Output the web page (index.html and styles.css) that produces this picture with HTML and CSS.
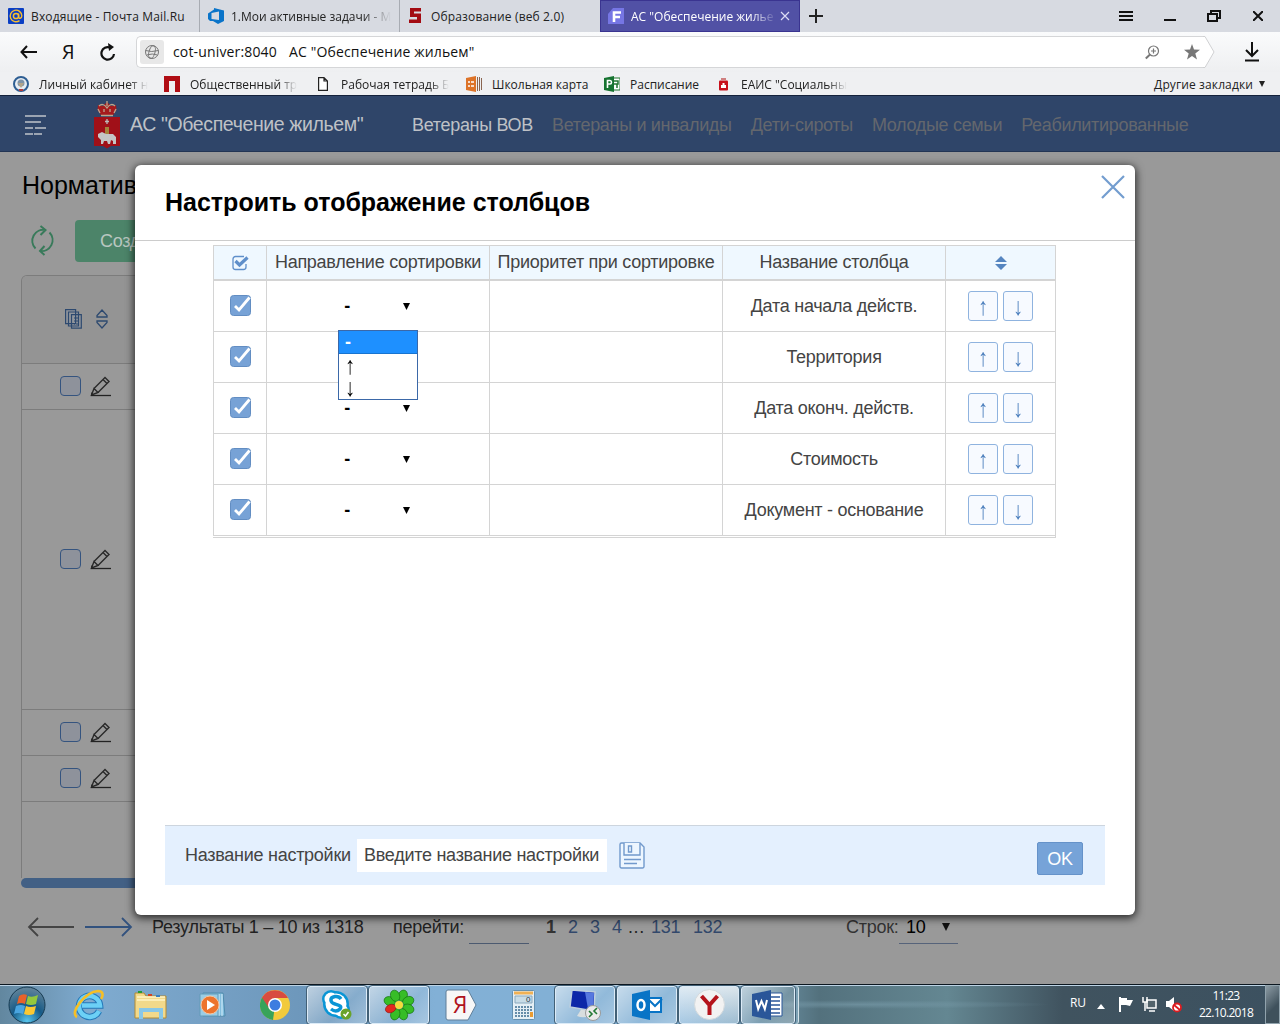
FILE: index.html
```
<!DOCTYPE html>
<html lang="ru">
<head>
<meta charset="utf-8">
<title>АС "Обеспечение жильем"</title>
<link rel="stylesheet" href="styles.css">
</head>
<body>
<svg class="defs" width="0" height="0">
  <symbol id="pencil" viewBox="0 0 22 22"><path d="M4 13.500 15 2.500l4 4L8 17.500M4 13.500 1.500 20l6.500-2.500zM13 4.500l4 4" fill="none" stroke="#292929" stroke-width="1.400"/><path d="M1 17v4h3" fill="#292929"/><path d="M1 20.500h20" stroke="#222" stroke-width="1.300"/></symbol>
  <symbol id="check" viewBox="0 0 21 21"><rect x=".5" y=".5" width="20" height="20" rx="3" fill="#77a2d6" stroke="#628dc2"/><path d="M5 11 9 15 19.500 2.500" fill="none" stroke="#fff" stroke-width="2.800"/></symbol>
</svg>
<div class="tabs">
  <div class="tab"><svg width="16" height="16"><rect width="16" height="16" rx="1" fill="#0b3fc4"/><circle cx="8" cy="8" r="2.600" fill="none" stroke="#f6bd2f" stroke-width="1.500"/><path d="M10.600 5.500v3.600c0 2 3.200 1.500 3.200-1.300A5.800 5.800 0 1 0 11.500 12.600" fill="none" stroke="#f6bd2f" stroke-width="1.400"/></svg><span class="t1">Входящие - Почта Mail.Ru</span></div>
  <div class="tab"><svg width="16" height="16"><path fill-rule="evenodd" d="M0 5.500 6 1.500V0l10 2.500v10.500L10 16l-5-3H2L0 11zM3.500 5v6l7.500 1V3.500z" fill="#0a74c9"/></svg><span class="t2 fade">1.Мои активные задачи - М</span></div>
  <div class="tab"><svg width="16" height="16"><path d="M2 0h11v3.500H6v2h7V15H1v-3.500h8V9H2z" fill="#a30b12"/></svg><span class="t3">Образование (веб 2.0)</span></div>
  <div class="tab active"><svg width="16" height="16"><path d="M5 0h11v16H0V6z" fill="#7676e4"/><path d="M6 14V4.500h7M6 9h6" stroke="#fff" stroke-width="2.600" fill="none"/></svg><span class="t4 fade">АС "Обеспечение жилье</span><svg class="x" width="10" height="10"><path d="M1 1l8 8M9 1 1 9" stroke="#dcdcf4" stroke-width="1.200"/></svg></div>
  <svg class="plus" width="14" height="14"><path d="M7 0v14M0 7h14" stroke="#222" stroke-width="2"/></svg>
  <div class="winbtns">
    <svg width="14" height="12"><path d="M0 2h14M0 6h14M0 10h14" stroke="#111" stroke-width="2"/></svg>
    <svg width="12" height="12"><path d="M0 10h12" stroke="#111" stroke-width="2"/></svg>
    <svg width="14" height="12"><path d="M1 4h9v7H1zM4 4V1h9v7h-3" fill="none" stroke="#111" stroke-width="2"/></svg>
    <svg width="10" height="10"><path d="M0 0l10 10M10 0 0 10" stroke="#111" stroke-width="2"/></svg>
  </div>
</div>
<div class="toolbar">
  <svg width="17" height="14"><path d="M7 1 1.500 7 7 13M1.500 7H17" fill="none" stroke="#111" stroke-width="2"/></svg>
  <span class="ya">Я</span>
  <svg width="16" height="18"><path d="M14 11A6.300 6.300 0 1 1 10 4.500" fill="none" stroke="#111" stroke-width="2.200"/><path d="M8 0l6 4-5 4z" fill="#111"/></svg>
  <div class="omni">
    <div class="globe"><svg width="16" height="16"><g fill="none" stroke="#777"><circle cx="8" cy="8" r="6.500"/><ellipse cx="8" cy="8" rx="3" ry="6.500" transform="rotate(15 8 8)"/><path d="M1.500 6.500q6 2 13 0M2.500 11q6-2 11 0"/></g></svg></div>
    <span class="url">cot-univer:8040</span><span class="ptitle">АС "Обеспечение жильем"</span>
    <svg class="mag" width="15" height="15"><circle cx="8.500" cy="6" r="5" fill="none" stroke="#777" stroke-width="1.200"/><path d="M6 6h5M8.500 3.500v5" stroke="#777" stroke-width="1.200"/><path d="M5 9.500.8 13.500" stroke="#777" stroke-width="2"/></svg>
    <svg class="star" width="16" height="16"><path d="M8 0l2 5.600 6 .2-4.700 3.700L13 15.500 8 12l-5 3.500 1.700-6L0 5.800l6-.2z" fill="#777"/></svg>
    <svg class="edge" width="12" height="32"><path d="M0 0H2L11 16 2 32H0z" fill="#fff"/><path d="M0 .5H2L11 16 2 31.500H0" fill="none" stroke="#cfd0d2"/></svg>
  </div>
  <svg class="dl" width="14" height="20"><path d="M7 0v14M1 8l6 6 6-6M0 18.500h14" fill="none" stroke="#111" stroke-width="2"/></svg>
</div>
<div class="bookmarks">
  <div class="bm b1"><svg width="16" height="16"><circle cx="8" cy="8" r="7" fill="#e8edf2" stroke="#2e5e93" stroke-width="2"/><circle cx="8" cy="7" r="3.500" fill="#7d93a8"/><path d="M5 7l3 5 3-5" fill="#b2a48a"/><path d="M6 14h4" stroke="#b23b3b" stroke-width="2"/></svg><span class="fade">Личный кабинет н</span></div>
  <div class="bm b2"><svg width="16" height="16"><path d="M0 0h16v16h-5V5H5v11H0z" fill="#b00d14"/></svg><span class="fade">Общественный тр</span></div>
  <div class="bm b3"><svg width="10" height="14"><path d="M.6.6H6L9.400 4v9.400H.6zM6 .6V4h3.400" fill="#fff" stroke="#222" stroke-width="1.200"/></svg><span class="fade">Рабочая тетрадь Б</span></div>
  <div class="bm b4"><svg width="16" height="16"><path d="M0 2 10 0v16L0 14z" fill="#dd7328"/><path d="M11.500 1v14M13.500 1v14M15.500 2v12" stroke="#8a6550"/><path d="M2 6h2m1 0h3M2 10h2m1 0h3" stroke="#fff" stroke-width="1.500"/></svg><span>Школьная карта</span></div>
  <div class="bm b5"><svg width="16" height="16"><path d="M9 2h7v12H9z" fill="#fff" stroke="#21742f"/><path d="M10 5h4v3h-4M13 8v4" fill="none" stroke="#21742f" stroke-width="1.500"/><path d="M0 2 10 0v16L0 14z" fill="#167330"/><path d="M3.500 12V4.500H6c2 0 2 3.500 0 3.500H4" fill="none" stroke="#fff" stroke-width="1.600"/></svg><span>Расписание</span></div>
  <div class="bm b6"><svg width="9" height="14"><path d="M2 1h5v2H2z" fill="#cf8080"/><rect y="3.500" width="9" height="10" rx="1" fill="#c8101b"/><path d="M3.500 6h2v2h1.500v3H2V8h1.500z" fill="#fff"/></svg><span class="fade">ЕАИС "Социальны</span></div>
  <div class="other"><span>Другие закладки</span><svg width="6" height="6"><path d="M0 0h6L3 6z" fill="#222"/></svg></div>
</div>
<div class="page">
  <div class="apphead">
    <svg class="burger" width="22" height="20"><path d="M0 1h21M0 7h16M0 13h8M10 13h11M0 19h8M9 19h8" stroke="#c0c3ca" stroke-width="1.400"/></svg>
    <svg class="crest" width="26" height="48"><path d="M4 4l5 1 4-4 4 4 5-1 .5 5-4 6h-11l-4-6z" fill="#a51a1d"/><path d="M13 0v5M5 5c3-3 6-1 8 2 2-3 5-5 8-2M4 8l2 4M22 8l-2 4M10 8v3M16 8v3M7 14.500h12" stroke="#b8a78f" stroke-width="1.300" fill="none"/><path d="M0 16h26v29H17l-4 2.500L9 45H0z" fill="#a01018"/><path d="M13 18v5M11 20.500h4" stroke="#bbb" stroke-width="1.300"/><path d="M11 26h4v7h-4z" fill="#a5823c"/><path d="M4 33l4-2 4 2h7l3 3v7h-3v-3l-2-1-1 4h-2l-1-3-3 0-1 3H7v-4l-3-3z" fill="#c5c5c5"/></svg>
    <span class="brand">АС "Обеспечение жильем"</span>
    <nav><span class="on">Ветераны ВОВ</span><span>Ветераны и инвалиды</span><span>Дети-сироты</span><span>Молодые семьи</span><span>Реабилитированные</span></nav>
  </div>
  <div class="content">
    <h1>Нормативы</h1>
    <div class="actions">
      <svg class="reload" width="25" height="31"><g fill="none" stroke="#387a5a" stroke-width="2"><path d="M5.500 23.500A11 11 0 0 1 15.500 5M19.500 7.500A11 11 0 0 1 10 26M10.500 1l5 4-5 5M14.500 21l-4.500 5 4.500 4"/></g></svg>
      <div class="create">Создать</div>
    </div>
    <div class="grid">
      <div class="row rhead">
        <svg width="17" height="20"><g fill="#92969c" stroke="#2d496f" stroke-width="1.200"><path d="M.6.6h10v14H.6zM3.500 3h10v14h-10zM6.500 5.600h9.800v13.600H6.500z"/><path d="M9 9h1m1 0h3M9 12h1m1 0h3M9 15h1m1 0h3"/></g></svg>
        <svg class="sorter" width="12" height="20"><path d="M1 8V6.500L6 1l5 5.500V8zM1 12v1.500L6 19l5-5.500V12z" fill="none" stroke="#2d496f" stroke-width="1.300"/></svg>
      </div>
      <div class="row"><i></i><svg width="22" height="22"><use href="#pencil"/></svg></div>
      <div class="row tall"><i></i><svg width="22" height="22"><use href="#pencil"/></svg></div>
      <div class="row"><i></i><svg width="22" height="22"><use href="#pencil"/></svg></div>
      <div class="row"><i></i><svg width="22" height="22"><use href="#pencil"/></svg></div>
      <div class="rest"></div>
    </div>
    <div class="hscroll"></div>
    <div class="pager">
      <svg width="48" height="20"><path d="M11 1 2 10l9 9M2 10h45" fill="none" stroke="#444" stroke-width="1.800"/></svg>
      <svg class="next" width="48" height="20"><path d="M37 1l9 9-9 9M46 10H0" fill="none" stroke="#32527e" stroke-width="1.800"/></svg>
      <span class="res">Результаты 1 – 10 из 1318</span>
      <span class="go">перейти:</span><span class="goin"></span>
      <div class="pages"><span class="cur">1</span><span>2</span><span>3</span><span>4</span><span class="dots">...</span><span class="p131">131</span><span>132</span></div>
      <span class="lines">Строк:</span><div class="cnt"><span>10</span><svg width="8" height="8"><path d="M0 0h8L4 8z" fill="#111"/></svg></div>
    </div>
  </div>
  <div class="modal">
    <div class="mhead"><h2>Настроить отображение столбцов</h2><svg width="24" height="24"><path d="M1 1l22 22M23 1 1 23" stroke="#739dcf" stroke-width="2.200"/></svg></div>
    <div class="cols">
      <div class="r h"><div><svg width="18" height="16"><path d="M15 9v3a2.500 2.500 0 0 1-2.500 2.500h-8A2.500 2.500 0 0 1 2 12V4a2.500 2.500 0 0 1 2.500-2.500H13" fill="none" stroke="#5f8fca" stroke-width="1.300"/><path d="M4.500 6l4 4L16.500 2.500" fill="none" stroke="#5f8fca" stroke-width="3.200"/></svg></div><div>Направление сортировки</div><div>Приоритет при сортировке</div><div>Название столбца</div><div><svg width="12" height="16"><path d="M0 7 6 1l6 6zM0 9h12l-6 6z" fill="#5585c0"/></svg></div></div>
      <div class="r"><div class="ck"><svg width="21" height="21"><use href="#check"/></svg></div><div class="sel"><span>-</span><svg width="7" height="7"><path d="M0 0h7L3.500 7z"/></svg></div><div></div><div>Дата начала действ.</div><div class="mv"><b><span>↑</span></b><b><span>↓</span></b></div></div>
      <div class="r"><div class="ck"><svg width="21" height="21"><use href="#check"/></svg></div><div class="sel"></div><div></div><div>Территория</div><div class="mv"><b><span>↑</span></b><b><span>↓</span></b></div></div>
      <div class="r"><div class="ck"><svg width="21" height="21"><use href="#check"/></svg></div><div class="sel"><span>-</span><svg width="7" height="7"><path d="M0 0h7L3.500 7z"/></svg></div><div></div><div>Дата оконч. действ.</div><div class="mv"><b><span>↑</span></b><b><span>↓</span></b></div></div>
      <div class="r"><div class="ck"><svg width="21" height="21"><use href="#check"/></svg></div><div class="sel"><span>-</span><svg width="7" height="7"><path d="M0 0h7L3.500 7z"/></svg></div><div></div><div>Стоимость</div><div class="mv"><b><span>↑</span></b><b><span>↓</span></b></div></div>
      <div class="r"><div class="ck"><svg width="21" height="21"><use href="#check"/></svg></div><div class="sel"><span>-</span><svg width="7" height="7"><path d="M0 0h7L3.500 7z"/></svg></div><div></div><div>Документ - основание</div><div class="mv"><b><span>↑</span></b><b><span>↓</span></b></div></div>
    </div>
    <div class="menu"><div class="pick">-</div><div class="opt"><span>↑</span></div><div class="opt"><span>↓</span></div></div>
    <div class="mfoot">
      <span class="lbl">Название настройки</span><div class="inp">Введите название настройки</div>
      <svg width="26" height="27"><g fill="#edf6ff" stroke="#7199cc" stroke-width="1.400"><path d="M1 2.500A1.500 1.500 0 0 1 2.500 1H21l4 4v19.500a1.500 1.500 0 0 1-1.500 1.500h-21A1.500 1.500 0 0 1 1 24.500z"/><path d="M5 1v12h16V1M9.500 4h3v6h-3zM5 17.500h17M5 21.500h13"/></g></svg>
      <div class="ok">OK</div>
    </div>
  </div>
</div>
<div class="taskbar">
  <div class="start"><svg width="38" height="38" viewBox="0 0 38 38"><defs><radialGradient id="orb" cx=".5" cy=".95" r=".9"><stop offset="0" stop-color="#58c6ee"/><stop offset=".5" stop-color="#165a87"/><stop offset="1" stop-color="#5f8299"/></radialGradient></defs><circle cx="19" cy="19" r="18" fill="url(#orb)" stroke="#173b52"/><path d="M11 10q4-3 8-1l-2 9q-4-2-8 0z" fill="#e8622a"/><path d="M20 10q4 2 10-1l-2 9q-5 2-10 0z" fill="#94c83d"/><path d="M8 20q5-2 9 0l-2 8q-5-2-9 0z" fill="#4aa5e0"/><path d="M18 20q4 2 10 0l-2 8q-5 2-10 0z" fill="#fbc832"/></svg></div>
  <div class="app"><svg width="32" height="32"><path d="M26 22A10.500 10.500 0 1 1 27 16.500H9" fill="none" stroke="#2478b8" stroke-width="6.500"/><path d="M26 22A10.500 10.500 0 1 1 27 16.500H9" fill="none" stroke="#6cd0f6" stroke-width="4.500"/><path d="M4 28C-4 24 12 3 25 2c6 0 5 5 3 8" fill="none" stroke="#f6bf26" stroke-width="2.600"/></svg></div>
  <div class="app"><svg width="34" height="30"><path d="M1 3h9l2 3h20v22H1z" fill="#f2d98b" stroke="#b38b35"/><path d="M3 7h28M3 10h28" stroke="#fff5c8" stroke-width="1.500"/><path d="M4 2h4" stroke="#279b31" stroke-width="2"/><path d="M14 5h4" stroke="#d24324" stroke-width="2"/><path d="M22 6h4" stroke="#3980c3" stroke-width="2"/><path d="M7 29v-9h20v9" fill="none" stroke="#88c7e8" stroke-width="4"/></svg></div>
  <div class="app"><svg width="28" height="26"><path d="M4 1h20l2 23H4z" fill="#83bede" stroke="#508bac"/><path d="M20 2v22M23 2v22" stroke="#d7f0fc"/><path d="M1 2h18v22H1z" fill="#9acde5" stroke="#629bb9"/><circle cx="11" cy="13" r="9" fill="#ed742d" stroke="#f7c5a0"/><path d="M8 8v10l8-5z" fill="#fff"/></svg></div>
  <div class="app"><svg width="30" height="30"><circle cx="15" cy="15" r="15" fill="#f2ca3c"/><path d="M15 15 13 30A15 15 0 0 1 2 7.500z" fill="#38a35a"/><path d="M15 8H28A15 15 0 0 0 2 7.500L9 18z" fill="#d84b40"/><circle cx="15" cy="15" r="7" fill="#fff"/><circle cx="15" cy="15" r="5.500" fill="#3e7de0"/></svg></div>
  <div class="app open"><svg width="32" height="32"><g fill="#0a95d5"><circle cx="10" cy="10" r="9"/><circle cx="20" cy="21" r="9"/><circle cx="15" cy="15" r="13"/></g><g fill="#fff"><circle cx="10" cy="10" r="6.500"/><circle cx="20" cy="21" r="6.500"/><circle cx="15" cy="15" r="10.500"/></g><path d="M20 10q-2-3-6-2.500c-6 1-5 6 0 7.500s7 2 5 5q-4 4-9 0" fill="none" stroke="#0a95d5" stroke-width="3.400"/><circle cx="25" cy="25" r="5.500" fill="#69a329"/><path d="M22.500 25l2 2 3-4" fill="none" stroke="#fff" stroke-width="1.500"/></svg></div>
  <div class="app open"><svg width="32" height="32" viewBox="-16 -16 32 32"><g fill="#37bd27" stroke="#126c0e" stroke-width=".6"><ellipse cx="0" cy="-10" rx="4.500" ry="5.800" transform="rotate(22)"/><ellipse cx="0" cy="-10" rx="4.500" ry="5.800" transform="rotate(67)"/><ellipse cx="0" cy="-10" rx="4.500" ry="5.800" transform="rotate(112)"/><ellipse cx="0" cy="-10" rx="4.500" ry="5.800" transform="rotate(157)"/><ellipse cx="0" cy="-10" rx="4.500" ry="5.800" transform="rotate(202)"/><ellipse cx="0" cy="-10" rx="4.500" ry="5.800" transform="rotate(292)"/><ellipse cx="0" cy="-10" rx="4.500" ry="5.800" transform="rotate(337)"/></g><ellipse cx="0" cy="-9" rx="4" ry="5.500" transform="rotate(247)" fill="#e22720" stroke="#8b1410" stroke-width=".6"/><circle r="4" fill="#f4dc3c"/></svg></div>
  <div class="app"><svg class="yatile" width="32" height="32"><path d="M3 1h20l8 15-8 15H3q-2 0-2-2V3q0-2 2-2z" fill="#f7f7f7" stroke="#607f99"/><text x="8" y="24" class="yatext">Я</text></svg></div>
  <div class="app"><svg width="23" height="30"><rect x=".5" y=".5" width="22" height="29" rx="1" fill="#e5eff5" stroke="#6591b0"/><path d="M2 3h19" stroke="#f0b154" stroke-width="3"/><path d="M3 6h17v7H3z" fill="#c8dce7" stroke="#8aa9be"/><path d="M3 17h17M3 20h17M3 23h17M3 26h17" stroke="#668da9" stroke-width="2" stroke-dasharray="2 1"/><path d="M18 22h3v5h-3z" fill="#eb9c31"/><text x="14" y="12" class="zero">0</text></svg></div>
  <div class="app open"><svg width="32" height="32"><path d="M13 19h8l2 7q-8 4-15 1z" fill="#d9dedf"/><path d="M3 1 26 3l-1 19L1 18z" fill="#0c27a8" stroke="#bed0de" stroke-width="1.500"/><path d="M16 3l9 1-1 17-5-1z" fill="#5678df"/><circle cx="24" cy="24" r="7.500" fill="#eaeaea" stroke="#999"/><path d="M20 22l3 3-3 3M28 19l-3 3 3 3" fill="none" stroke="#237935" stroke-width="1.600"/></svg></div>
  <div class="app open"><svg width="32" height="30"><path d="M17 8h13v14H17z" fill="#fff" stroke="#0874c6" stroke-width="2"/><path d="M18 10l6 6 7-7" fill="none" stroke="#0874c6" stroke-width="2"/><path d="M1 4 19 0v30L1 26z" fill="#0874c6"/><ellipse cx="10" cy="15" rx="3.500" ry="5" fill="none" stroke="#fff" stroke-width="2.500"/></svg></div>
  <div class="app open hot"><svg width="31" height="31"><circle cx="15.500" cy="15.500" r="15" fill="#f2f2f2" stroke="#d4dadd"/><path d="M7.500 7l8 9 8-9M15.500 15v11" fill="none" stroke="#b4131b" stroke-width="4"/></svg></div>
  <div class="app open word"><svg width="32" height="30"><path d="M18 3h12v23H18z" fill="#fff" stroke="#2a5699"/><path d="M19 7h9M19 11h9M19 15h9M19 19h9M19 23h9" stroke="#2a5699" stroke-width="1.500"/><path d="M0 4 19 0v30L0 26z" fill="#2a5699"/><path d="M4 10l2.200 9L9.500 11l3.300 8L15 10" fill="none" stroke="#fff" stroke-width="2"/></svg></div>
  <div class="tray">
    <span class="lang">RU</span>
    <svg class="up" width="8" height="5"><path d="M4 0l4 5H0z" fill="#fff"/></svg>
    <svg class="flag" width="16" height="15"><path d="M1 0h2v15H1z" fill="#fff"/><path d="M3 1h6v2h6l-3 6-4-1H3z" fill="#fff"/></svg>
    <svg class="net" width="15" height="15"><path d="M5 3h9v8H5z" fill="#52636c" stroke="#fff" stroke-width="1.500"/><path d="M1 0v5h4V0M3 5v9M7 14h6" fill="none" stroke="#fff" stroke-width="1.500"/></svg>
    <svg class="snd" width="16" height="16"><path d="M0 4h3l5-4v14l-5-4H0z" fill="#fff"/><circle cx="11" cy="10.500" r="4" fill="#fff" stroke="#dc1c20" stroke-width="1.800"/><path d="M8 8l6 5" stroke="#dc1c20" stroke-width="1.800"/></svg>
    <div class="clock"><span>11:23</span><span>22.10.2018</span></div>
    <div class="peek"></div>
  </div>
</div>
</body>
</html>
```
FILE: styles.css
```
* { box-sizing: border-box; }
body { margin: 0; width: 1280px; height: 1024px; overflow: hidden; display: flex; flex-direction: column; background: #999; font-family: "Liberation Sans", Arial, sans-serif; }
svg { flex: none; display: block; }
span { white-space: nowrap; }
.defs { position: absolute; }
.fade { -webkit-mask-image: linear-gradient(90deg, #000 82%, transparent 100%); mask-image: linear-gradient(90deg, #000 82%, transparent 100%); }

.tabs, .toolbar, .bookmarks { font-family: "Open Sans", "Noto Sans", sans-serif; flex: none; display: flex; align-items: center; color: #222; }
.tabs { height: 32px; background: #d7dae1; font-size: 12px; letter-spacing: .15px; }
.tab { width: 200px; height: 32px; padding: 0 8px; display: flex; align-items: center; gap: 7px; border-right: 1px solid #a8acb3; }
.tab:nth-child(3) { border-right: 0; }
.tab.active { padding-left: 7px; background: #5151a5; color: #fff; border: 1px solid #3a3490; letter-spacing: 0; }
.t2 { letter-spacing: 0; }
.t4 { width: 146px; }
.active .x { margin-left: -4px; }
.plus { margin-left: 9px; }
.winbtns { margin-left: auto; padding-right: 17px; display: flex; align-items: center; }
.winbtns svg:nth-child(2) { margin-left: 31px; }
.winbtns svg:nth-child(3) { margin-left: 31px; }
.winbtns svg:nth-child(4) { margin-left: 32px; }

.toolbar { height: 40px; padding: 0 21px 0 20px; background: linear-gradient(#fafbfc, #eeeff1); }
.ya { margin-left: 25px; width: 12px; margin-right: 26px; font-size: 20px; line-height: 24px; color: #111; }
.omni { margin-left: 20px; height: 32px; width: 1068px; border: 1px solid #d5d6d8; border-right: 0; border-radius: 5px 0 0 5px; background: #fff; display: flex; align-items: center; font-size: 14px; color: #111; letter-spacing: .15px; }
.omni span { margin-bottom: 2px; }
.globe { margin-left: 3px; width: 24px; height: 24px; border-radius: 3px; background: #e8e8e8; display: grid; place-items: center; }
.url { margin-left: 9px; width: 116px; }
.mag { margin-left: auto; margin-right: 24px; }
.star { margin-right: 3px; }
.edge { margin-right: -11px; }
.dl { margin-left: auto; }

.bookmarks { height: 24px; padding: 0 15px 0 13px; font-size: 12px; background: #eff0f2; border-bottom: 1px solid #14213b; }
.bookmarks span { padding-top: 1px; }
.bm { display: flex; align-items: center; gap: 10px; flex: none; }
.b1 { width: 151px; }
.b2 { width: 154px; }
.b3 { width: 148px; gap: 13px; }
.b4 { width: 138px; }
.b5 { width: 115px; }
.b6 { gap: 13px; }
.other { margin-left: auto; display: flex; align-items: center; gap: 6px; letter-spacing: .12px; }

.page { height: 888px; flex: none; position: relative; background: #999; font-size: 18px; letter-spacing: -.27px; color: #222; }
.apphead { height: 56px; padding-top: 2px; background: #2f4569; border-bottom: 1px solid #233554; display: flex; align-items: center; }
.burger { margin-left: 25px; }
.crest { margin-left: 47px; }
.brand { margin-left: 10px; width: 282px; font-size: 19.5px; letter-spacing: -.38px; color: #bec1c6; }
nav { display: flex; gap: 19px; color: #64676d; padding-top: 1px; }
nav span { letter-spacing: -.32px; }
nav .on { color: #bec1c6; }
.content { padding: 20px 21px 0; }
h1 { margin: 0; font-weight: 400; font-size: 25px; line-height: 27px; height: 28px; letter-spacing: 0; padding-left: 1px; color: #000; }
.actions { height: 42px; margin-top: 20px; display: flex; align-items: center; padding-left: 9px; }
.reload { margin-top: -2px; }
.create { margin-left: 20px; width: 120px; height: 42px; line-height: 42px; padding-left: 25px; border-radius: 4px; background: #4c8469; color: #b9c7c0; }
.grid { width: 1000px; margin-top: 13px; height: 603px; border: 1px solid #7c7c7c; border-bottom: 0; border-radius: 6px 6px 0 0; }
.row { height: 46px; border-bottom: 1px solid #7c7c7c; display: flex; align-items: center; padding: 0 0 2px 38px; }
.row.rhead { height: 88px; padding-left: 43px; background: #949494; border-radius: 5px 5px 0 0; }
.sorter { margin-left: 14px; }
.row.tall { height: 300px; }
.row i { width: 21px; height: 20px; border: 1px solid #35547f; border-radius: 4px; background: #8e929b; margin-right: 9px; }
.hscroll { height: 10px; width: 1000px; border-radius: 5px; background: #426085; }
.pager { margin-top: 20px; height: 36px; padding-left: 6px; display: flex; align-items: center; }
.pager > * { flex: none; margin-top: 2px; }
.next { margin-left: 10px; }
.res { margin-left: 19px; width: 241px; line-height: 20px; }
.go { width: 76px; }
.goin { width: 60px; height: 1px; background: #4c5a70; align-self: flex-end; }
.pages { margin-left: 17px; width: 300px; display: flex; color: #32486b; }
.pages span { width: 22px; }
.pages .cur { color: #333; font-weight: 700; }
.pages .dots { width: 17px; color: #222; margin-left: -6px; letter-spacing: .6px; }
.pages .p131 { width: 42px; margin-left: 6px; }
.lines { width: 53px; color: #333; }
.pager > .cnt { width: 59px; height: 36px; margin: 0; padding: 3px 8px 0 7px; display: flex; align-items: center; gap: 17px; border-bottom: 1px solid #56637a; color: #000; letter-spacing: -.3px; }

.modal { position: absolute; left: 135px; top: 69px; width: 1000px; height: 750px; background: #fff; border-radius: 6px; box-shadow: 0 2px 9px 1px rgba(0,0,0,.75); display: flex; flex-direction: column; align-items: center; color: #444; }
.mhead { width: 1000px; height: 76px; flex: none; border-bottom: 1px solid #ccc; padding: 0 10px 0 30px; display: flex; justify-content: space-between; align-items: flex-start; }
.mhead svg { margin-top: 10px; }
h2 { margin: 23px 0 0; font-size: 25px; line-height: 29px; letter-spacing: 0; color: #000; white-space: nowrap; }
.cols { align-self: flex-start; margin: 4px 0 0 78px; width: 843px; height: 293px; border: 1px solid #d4d4d4; border-left: 0; }
.r { height: 51px; display: grid; grid-template-columns: 53px 223px 233px 223px 110px; border-bottom: 1px solid #d4d4d4; }
.r > div { border-left: 1px solid #d4d4d4; display: flex; align-items: center; justify-content: center; white-space: nowrap; }
.r.h { height: 35px; background: #eff8ff; border-bottom: 2px solid #d4d4d4; }
.r > .ck { padding-bottom: 2px; }
.sel { color: #000; gap: 53px; }
.r > .sel { padding-right: 2px; }
.sel span { font-weight: 700; }
.mv { gap: 5px; }
.mv b { width: 30px; height: 30px; border: 1px solid #8fb3df; border-radius: 3px; background: #f7faff; color: #4c7fbd; font-weight: 400; display: grid; place-items: center; font-size: 20px; }
.mv b span, .menu span { display: block; font-size: 20px; line-height: 16px; transform: scaleY(1.25); letter-spacing: 0; }
.menu { position: absolute; left: 203px; top: 165px; width: 80px; height: 70px; border: 1px solid #3b68a8; background: #fff; color: #000; line-height: 22px; font-size: 18px; }
.menu div { height: 22px; padding-left: 6px; }
.menu .pick { height: 23px; background: #1e90ff; color: #fff; font-weight: 700; border-bottom: 1px solid #1774d0; }
.menu .opt { display: flex; align-items: center; }
.mfoot { margin-top: auto; margin-bottom: 30px; width: 940px; height: 60px; border-top: 1px solid #cdd5de; background: #e4f0fe; padding: 0 22px 0 20px; display: flex; align-items: center; }
.lbl { width: 172px; }
.inp { width: 250px; height: 33px; line-height: 32px; padding-left: 7px; background: #fff; margin-right: 12px; white-space: nowrap; }
.ok { margin-left: auto; margin-top: 6px; width: 46px; height: 33px; border: 1px solid #6592c9; border-radius: 2px; background: #76a3d8; color: #fff; text-align: center; line-height: 32px; }

.taskbar { height: 40px; flex: none; border-top: 1px solid #0c1720; box-shadow: inset 0 1px #bcd3e5; background: radial-gradient(ellipse at 67% 50%, rgba(125,160,175,.55), transparent 16%), linear-gradient(90deg, #62879f 0, #7fabd0 7%, #6d97bb 24%, #82b0d6 34%, #82b0d4 53%, #668a9c 61%, #53717d 64%, #648792 74%, #40535f 83%, #3c5160 100%); display: flex; align-items: center; }
.start { width: 59px; padding-left: 8px; }
.app { width: 60px; height: 38px; margin-right: 2px; display: flex; align-items: center; justify-content: center; flex: none; }
.app.open { border: 1px solid #dcebf7; border-radius: 3px; outline: 1px solid #426076; outline-offset: 0; background: linear-gradient(135deg, rgba(255,255,255,.55), rgba(255,255,255,.12) 60%, rgba(255,255,255,.3)); }
.app.hot { background: linear-gradient(rgba(255,255,255,.75), rgba(225,240,252,.4)); }
.app.word { box-shadow: 3px 0 0 #7da2b5, 4px 0 0 #d5e3ea; width: 54px; }
.yatile { overflow: visible; }
.yatext { font: 23px "Open Sans", sans-serif; fill: #b0131c; }
.zero { font: 8px "Liberation Sans", sans-serif; fill: #234; }
.tray { margin-left: auto; height: 39px; display: flex; align-items: center; color: #fff; font: 12px "Open Sans", "Noto Sans", sans-serif; }
.lang { width: 27px; font-size: 12px; letter-spacing: -.2px; margin-bottom: 5px; }
.up { margin-right: 13px; margin-top: 3px; }
.flag { margin-right: 8px; }
.net { margin-right: 9px; }
.clock { margin-left: 16px; margin-right: 11px; width: 56px; height: 36px; display: flex; flex-direction: column; align-items: center; line-height: 17px; font-size: 12px; letter-spacing: -.7px; }
.peek { width: 15px; height: 39px; border: 1px solid #91a3ad; background: linear-gradient(135deg, #8b9aa3, #3f515c 60%); }
```
